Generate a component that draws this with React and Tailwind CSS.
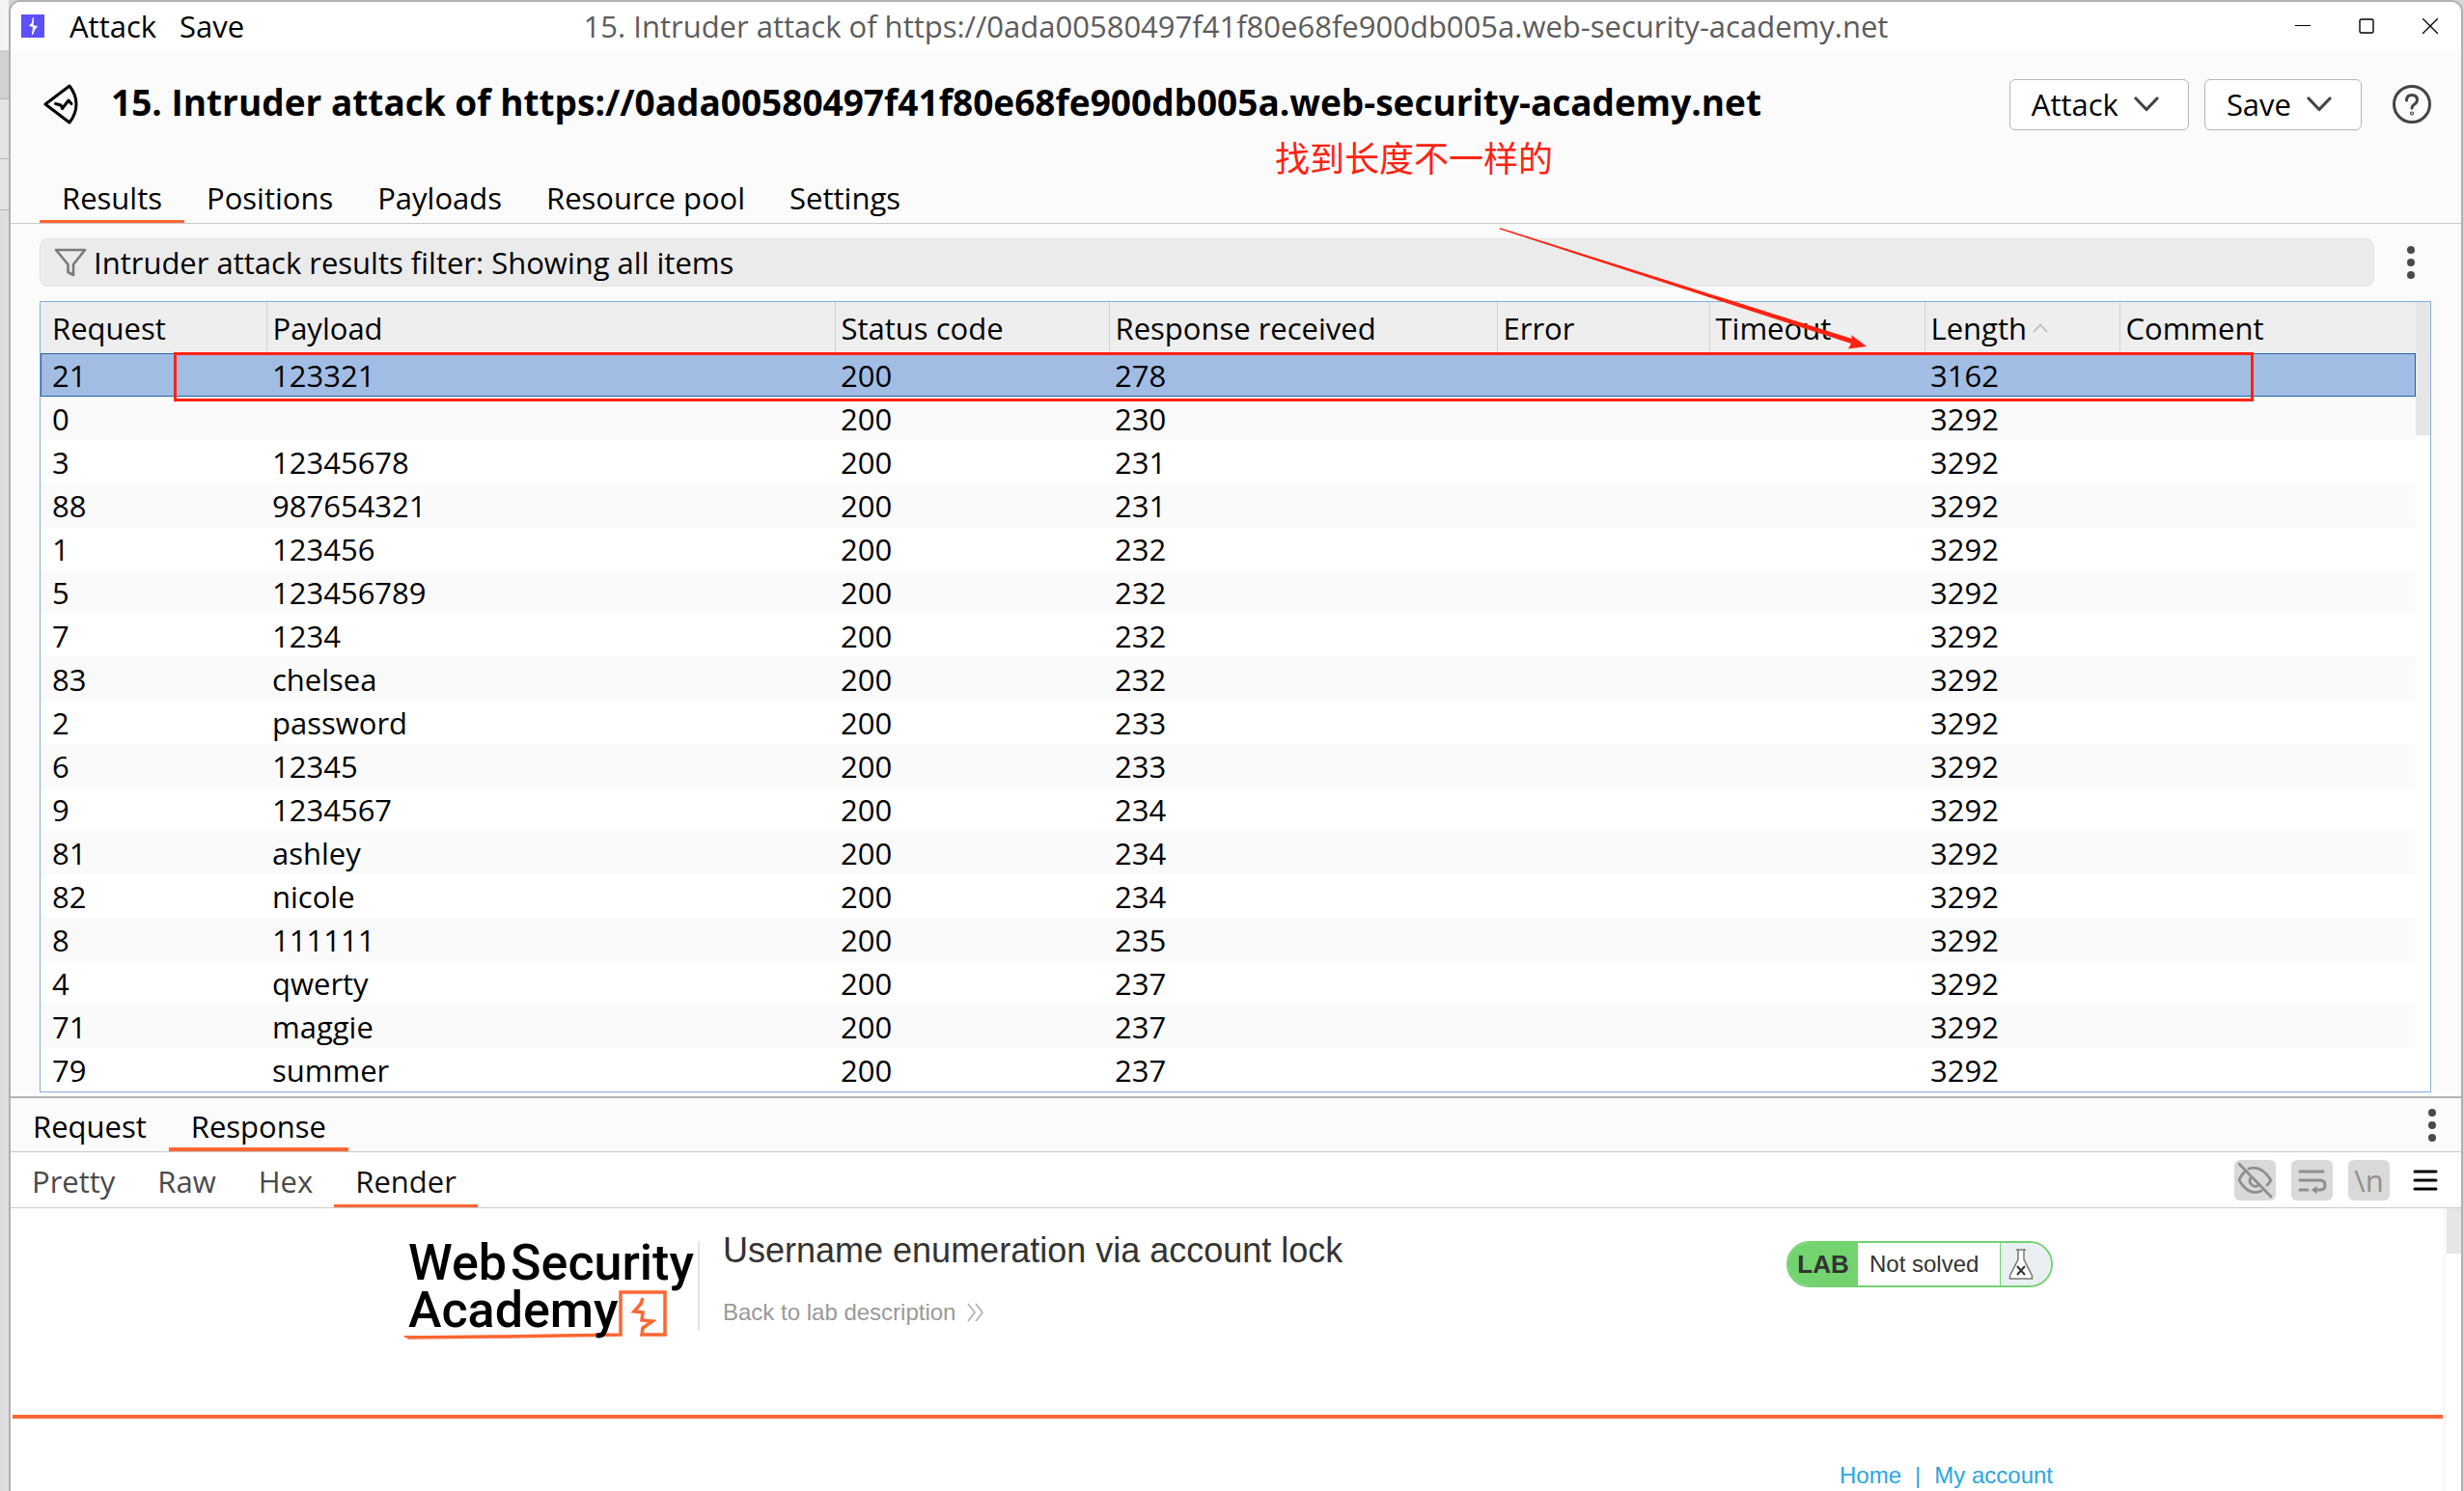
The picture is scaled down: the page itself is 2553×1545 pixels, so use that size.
import { useState } from 'react'

const columns = [
  { key: 'request', label: 'Request', width: 'w-[234px]' },
  { key: 'payload', label: 'Payload', width: 'w-[589px]' },
  { key: 'status', label: 'Status code', width: 'w-[284px]' },
  { key: 'received', label: 'Response received', width: 'w-[402px]' },
  { key: 'error', label: 'Error', width: 'w-[220px]' },
  { key: 'timeout', label: 'Timeout', width: 'w-[223px]' },
  { key: 'length', label: 'Length', width: 'w-[202px]', sorted: true },
  { key: 'comment', label: 'Comment', width: '' },
]

const rows = [
  { request: 21, payload: '123321', status: 200, received: 278, length: 3162 },
  { request: 0, payload: '', status: 200, received: 230, length: 3292 },
  { request: 3, payload: '12345678', status: 200, received: 231, length: 3292 },
  { request: 88, payload: '987654321', status: 200, received: 231, length: 3292 },
  { request: 1, payload: '123456', status: 200, received: 232, length: 3292 },
  { request: 5, payload: '123456789', status: 200, received: 232, length: 3292 },
  { request: 7, payload: '1234', status: 200, received: 232, length: 3292 },
  { request: 83, payload: 'chelsea', status: 200, received: 232, length: 3292 },
  { request: 2, payload: 'password', status: 200, received: 233, length: 3292 },
  { request: 6, payload: '12345', status: 200, received: 233, length: 3292 },
  { request: 9, payload: '1234567', status: 200, received: 234, length: 3292 },
  { request: 81, payload: 'ashley', status: 200, received: 234, length: 3292 },
  { request: 82, payload: 'nicole', status: 200, received: 234, length: 3292 },
  { request: 8, payload: '111111', status: 200, received: 235, length: 3292 },
  { request: 4, payload: 'qwerty', status: 200, received: 237, length: 3292 },
  { request: 71, payload: 'maggie', status: 200, received: 237, length: 3292 },
  { request: 79, payload: 'summer', status: 200, received: 237, length: 3292 },
]

const attackName = '15. Intruder attack of https://0ada00580497f41f80e68fe900db005a.web-security-academy.net'

function Kebab() {
  return (
    <button aria-label="More options" className="flex w-10 flex-col items-center gap-[5px]">
      <span className="h-2 w-2 rounded-full bg-[#4a4a4a]" />
      <span className="h-2 w-2 rounded-full bg-[#4a4a4a]" />
      <span className="h-2 w-2 rounded-full bg-[#4a4a4a]" />
    </button>
  )
}

function TitleBar() {
  return (
    <div className="grid h-[50px] grid-cols-[1fr_auto_1fr] items-center bg-white">
      <div className="flex items-center pl-[11px]">
        <svg viewBox="0 0 24 24" className="h-6 w-6">
          <rect width="24" height="24" fill="#5b50fb" />
          <path d="M12.5 3L11.5 8.5L8.5 11.5L12.5 12.5L11.5 21L13.5 16L16.5 12.5L12 11.5Z" fill="#fff" stroke="#fff" strokeWidth="1" />
        </svg>
        <button className="ml-[26px]">Attack</button>
        <button className="ml-6">Save</button>
      </div>
      <p className="text-[#5c5c5c]">{attackName}</p>
      <div className="flex items-center justify-end gap-[50px] pr-6">
        <button aria-label="Minimize">
          <svg viewBox="0 0 16 16" className="h-4 w-4"><path d="M0 7.5H16" stroke="#000" /></svg>
        </button>
        <button aria-label="Maximize">
          <svg viewBox="0 0 16 16" className="h-4 w-4"><rect x="1" y="1" width="14" height="14" rx="1.5" fill="none" stroke="#000" strokeWidth="1.4" /></svg>
        </button>
        <button aria-label="Close">
          <svg viewBox="0 0 16 16" className="h-4 w-4"><path d="M0 0L16 16M16 0L0 16" stroke="#000" strokeWidth="1.3" /></svg>
        </button>
      </div>
    </div>
  )
}

function MenuButton({ label }) {
  return (
    <button className="flex h-[53px] items-center gap-4 rounded-md border border-[#b9b4b4] bg-white pl-[22px] pr-[30px]">
      {label}
      <svg viewBox="0 0 26 16" className="h-4 w-[26px]">
        <path d="M2 2L13 13.5L24 2" fill="none" stroke="#444" strokeWidth="3.2" strokeLinecap="round" strokeLinejoin="round" />
      </svg>
    </button>
  )
}

function Header() {
  return (
    <div className="flex h-[112px] items-center justify-between pl-[34px] pr-[31px]">
      <div className="flex items-center gap-[34px]">
        <svg viewBox="0 0 36 42" className="h-[42px] w-9" fill="none" stroke="#000" strokeWidth="3" strokeLinecap="round" strokeLinejoin="round">
          <path d="M27 2L2 21L27 40Q34 31 34 21Q34 11 27 2Z" />
          <path d="M12.5 20.5L18 22L19.5 25.5L26 17L29 20.5" />
        </svg>
        <h1 className="pb-1 text-[37px] font-bold">{attackName}</h1>
      </div>
      <div className="flex items-center gap-4">
        <MenuButton label="Attack" />
        <MenuButton label="Save" />
        <button aria-label="Help" className="ml-4">
          <svg viewBox="0 0 40 40" className="h-10 w-10" fill="none" stroke="#444" strokeWidth="3" strokeLinecap="round">
            <circle cx="20" cy="20" r="18.5" />
            <path d="M14.5 16Q14.5 10.5 20 10.5Q25.5 10.5 25.5 15.5Q25.5 18.5 22 20.5Q20 21.7 20 24" />
            <circle cx="20" cy="29.5" r="0.6" />
          </svg>
        </button>
      </div>
    </div>
  )
}

function MainTabs() {
  const [active, setActive] = useState('Results')
  return (
    <div className="flex h-[68px] items-end border-b border-[#cbcbcb] pl-[30px]">
      {['Results', 'Positions', 'Payloads', 'Resource pool', 'Settings'].map((tab) => (
        <button
          key={tab}
          onClick={() => setActive(tab)}
          className={`h-[50px] border-b-[3px] px-[23px] ${active === tab ? 'border-[#ff6633]' : 'border-transparent'}`}
        >
          {tab}
        </button>
      ))}
    </div>
  )
}

function FilterBar() {
  return (
    <div className="flex items-center justify-between pl-[30px] pr-8 pt-[15px]">
      <button className="flex h-[50px] min-w-0 flex-1 items-center gap-[7px] rounded-lg border border-[#e4e4e4] bg-[#ebebeb] pl-3.5">
        <svg viewBox="0 0 34 32" className="h-8 w-[34px]" fill="none" stroke="#7a7a7a" strokeWidth="2.6" strokeLinejoin="round">
          <path d="M2 3H32L20 18V29L14.5 26V18Z" />
        </svg>
        Intruder attack results filter: Showing all items
      </button>
      <div className="pl-[18px]">
        <Kebab />
      </div>
    </div>
  )
}

function ResultsTable() {
  const [selected, setSelected] = useState(21)
  return (
    <div className="relative ml-[30px] mr-[31px] mt-[15px]">
      <div className="flex border border-[#86aedb] bg-white">
        <table className="min-w-0 flex-1 table-fixed border-collapse text-left">
          <thead>
            <tr className="h-[53px] bg-[#eeeeee]">
              {columns.map((col) => (
                <th key={col.key} className={`${col.width} border-r border-[#d2d2d2] p-0 pl-1.5 font-normal first:pl-3 last:border-r-0`}>
                  <span className="flex items-center gap-1.5 whitespace-nowrap">
                    {col.label}
                    {col.sorted && (
                      <svg viewBox="0 0 16 10" className="h-2.5 w-4"><path d="M1 9L8 1.5L15 9" fill="none" stroke="#b5b5b5" strokeWidth="1.5" /></svg>
                    )}
                  </span>
                </th>
              ))}
            </tr>
          </thead>
          <tbody>
            {rows.map((row) => (
              <tr
                key={row.request}
                onClick={() => setSelected(row.request)}
                className={`h-[45px] ${selected === row.request ? 'bg-[#a2bde4] outline-1 -outline-offset-1 outline-[#2464a3]' : 'bg-white even:bg-[#fafafa]'}`}
              >
                {columns.map((col) => (
                  <td key={col.key} className="p-0 pl-1.5 first:pl-3">{row[col.key]}</td>
                ))}
              </tr>
            ))}
          </tbody>
        </table>
        <div className="w-[15px]">
          <div className="h-[138px] bg-[#e6e6e6]" />
        </div>
      </div>

      {/* Markup drawn over the table */}
      <div className="pointer-events-none absolute left-[139px] right-[184px] top-[53px] h-[51px] border-[3px] border-[#ff2211]" />
      <svg viewBox="0 0 380 126" className="pointer-events-none absolute -top-[76px] right-[585px] h-[126px] w-[380px]">
        <path d="M0 0L0 1.5L364 120L361 125.5L380 123L364 111L365 115Z" fill="#ff2211" />
      </svg>
      <p className="absolute -top-[174px] right-[910px] font-['Noto_Sans_CJK_SC',sans-serif] text-[36px] leading-[48px] text-[#ff2211]">找到长度不一样的</p>
    </div>
  )
}

function MessageTabs() {
  const [active, setActive] = useState('Response')
  return (
    <div className="mt-1 flex h-[58px] items-center justify-between border-b border-t-2 border-b-[#cbcbcb] border-t-[#b5b5b5] pr-2.5">
      <div className="flex h-full items-end">
        {['Request', 'Response'].map((tab) => (
          <button
            key={tab}
            onClick={() => setActive(tab)}
            className={`h-12 border-b-[4px] px-[23px] ${active === tab ? 'border-[#ff6633]' : 'border-transparent'}`}
          >
            {tab}
          </button>
        ))}
      </div>
      <Kebab />
    </div>
  )
}

function ViewTabs() {
  const [active, setActive] = useState('Render')
  return (
    <div className="flex h-[58px] items-center justify-between border-b border-[#cbcbcb] bg-white pr-6">
      <div className="flex h-full items-end">
        {['Pretty', 'Raw', 'Hex', 'Render'].map((tab) => (
          <button
            key={tab}
            onClick={() => setActive(tab)}
            className={`h-[52px] border-b-[3px] px-[22px] ${active === tab ? 'border-[#ff6633] text-[#111]' : 'border-transparent text-[#4a4a4a]'}`}
          >
            {tab}
          </button>
        ))}
      </div>
      <div className="flex items-center gap-4">
        <button aria-label="Hide non-printable" className="rounded-md bg-[#d9d9d9]">
          <svg viewBox="0 0 43 42" className="h-[42px] w-[43px]" fill="none" stroke="#8f8f8f" strokeWidth="2.8" strokeLinecap="round" strokeLinejoin="round">
            <path d="M5 4L38 38M15 9Q28 5 38 21Q36 24 34 26M10 13Q7 16 5 21Q15 38 28 32" />
            <path d="M17 18Q14 24 20 27Q23 28 25 26" />
          </svg>
        </button>
        <button aria-label="Word wrap" className="rounded-md bg-[#d9d9d9]">
          <svg viewBox="0 0 43 42" className="h-[42px] w-[43px]" fill="none" stroke="#8f8f8f" strokeWidth="3" strokeLinecap="round" strokeLinejoin="round">
            <path d="M9 12H33M9 21H30Q35 21 35 26Q35 31 30 31H25M9 31H17" />
            <path d="M26 28L22 31L26 34Z" strokeWidth="1.5" fill="#8f8f8f" />
          </svg>
        </button>
        <button className="h-[42px] w-[43px] rounded-md bg-[#d9d9d9] leading-[42px] text-[#8f8f8f]">\n</button>
        <button aria-label="Menu" className="ml-2">
          <svg viewBox="0 0 26 24" className="h-6 w-[26px]"><path d="M2 3H24M2 12H24M2 21H24" stroke="#000" strokeWidth="3" strokeLinecap="round" /></svg>
        </button>
      </div>
    </div>
  )
}

function AcademyLogo() {
  return (
    <div className="relative mt-0.5 w-[298px] pl-1 font-['Roboto',sans-serif] text-[52px] font-medium leading-[49px] text-black">
      <div className="relative z-10">
        <p className="flex gap-1"><span>Web</span><span>Security</span></p>
        <p>Academy</p>
      </div>
      <svg viewBox="0 0 298 110" className="absolute left-0 top-0 h-[110px] w-[298px]" fill="none" stroke="#ff6633" strokeWidth="3.5">
        <path d="M3 102L100 101L224 99V55H270V99H246L247 92L257 85L246 84L247 76L238 75L245 67L247 61" />
        <path d="M0 101L60 101.5L150 101" strokeWidth="2" />
      </svg>
    </div>
  )
}

function RenderPane() {
  return (
    <div className="flex flex-1 bg-white font-['Liberation_Sans',Arial,sans-serif] leading-7">
      <div className="min-w-0 flex-1 pl-0.5">
        <header className="flex h-[218px] items-start justify-between border-b-[4px] border-[#ff6633] pl-[406px] pr-[404px] pt-[30px]">
          <div className="flex">
            <AcademyLogo />
            <div className="ml-1.5 mt-1 flex h-[92px] border-l-2 border-[#e3e3e3] pl-6">
              <div className="-mt-2">
                <h2 className="text-[36px] leading-9 text-[#333332]">Username enumeration via account lock</h2>
                <a href="#lab" className="mt-8 flex items-center gap-3 text-[24px] text-[#999]">
                  Back to lab description
                  <svg viewBox="0 0 18 20" className="h-5 w-[18px]" fill="none" stroke="#aaa" strokeWidth="1.5">
                    <path d="M1 1L8 10L1 19M9 1L16 10L9 19" />
                  </svg>
                </a>
              </div>
            </div>
          </div>
          <div className="mt-1 flex h-12 items-stretch overflow-hidden rounded-full border-2 border-[#72d36f] bg-white text-[24px] text-[#333332]">
            <span className="flex w-[72px] items-center justify-center bg-[#72d36f] text-[26px] font-bold">LAB</span>
            <span className="flex w-[148px] items-center border-r border-[#72d36f] pl-3">Not solved</span>
            <span className="flex w-[52px] items-center bg-[#eaeff2] pl-2">
              <svg viewBox="0 0 26 32" className="h-8 w-[26px]" fill="#fff" stroke="#777" strokeWidth="1.5">
                <path d="M8 1H18M10 1V11L1.5 28V31H24.5V28L16 11V1" />
                <path d="M9 18L17 27M17 18L9 27" stroke="#333" strokeWidth="2" />
              </svg>
            </span>
          </div>
        </header>
        <nav className="flex justify-end gap-3.5 pr-[404px] pt-[45px] text-[24px] text-[#29a7e1]">
          <a href="#home">Home</a>
          <span>|</span>
          <a href="#account">My account</a>
        </nav>
      </div>
      <div className="flex w-[19px] justify-end border-l-4 border-[#fafafa]">
        <div className="h-[47px] w-full bg-[#e6e6e6]" />
      </div>
    </div>
  )
}

export default function App() {
  return (
    <div className="flex min-h-screen overflow-hidden bg-[#d6d6d6] font-['Open_Sans','Noto_Sans',sans-serif] text-[31px] leading-10 text-black">
      {/* Sliver of the window behind */}
      <div className="w-[9px] bg-[#dedede]">
        <div className="h-[52px] bg-[#f3f3f3]" />
        <div className="h-[51px] border-b border-[#b5b5b5] bg-[#d0d0d0]" />
        <div className="h-[62px] border-b border-[#b5b5b5] bg-[#e4e4e4]" />
        <div className="h-[53px] border-b border-[#b5b5b5] bg-[#e4e4e4]" />
      </div>
      <div className="flex min-w-0 flex-1 flex-col overflow-hidden rounded-t-xl border-x-2 border-t-2 border-[#b0b0b0] bg-[#fbfbfb]">
        <TitleBar />
        <Header />
        <MainTabs />
        <FilterBar />
        <ResultsTable />
        <MessageTabs />
        <ViewTabs />
        <RenderPane />
      </div>
      <div className="w-px" />
    </div>
  )
}
